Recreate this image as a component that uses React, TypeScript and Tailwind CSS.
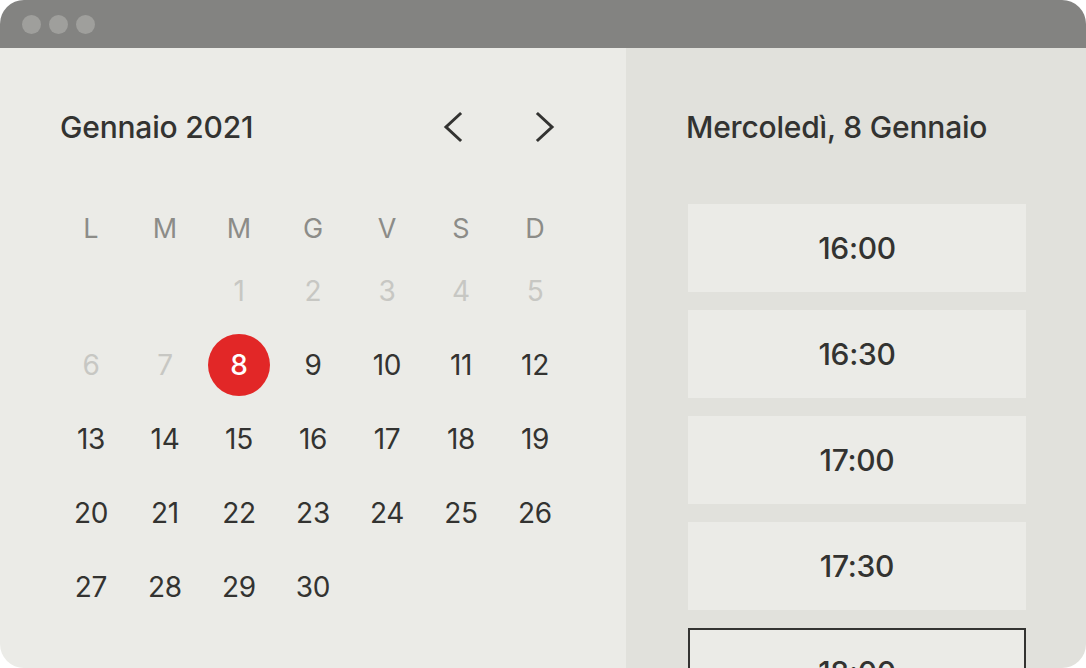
import { useState } from "react";

const weekdays = ["L", "M", "M", "G", "V", "S", "D"];

const cells: Array<{ day: number | null; muted?: boolean }> = [
  { day: null },
  { day: null },
  { day: 1, muted: true },
  { day: 2, muted: true },
  { day: 3, muted: true },
  { day: 4, muted: true },
  { day: 5, muted: true },
  { day: 6, muted: true },
  { day: 7, muted: true },
  ...Array.from({ length: 23 }, (_, i) => ({ day: i + 8 })),
];

const slots = ["16:00", "16:30", "17:00", "17:30", "18:00"];

function Chevron({ dir }: { dir: "left" | "right" }) {
  return (
    <svg width="20" height="32" viewBox="0 0 20 32" fill="none" stroke="#333331" strokeWidth="3" strokeLinecap="square">
      {dir === "left" ? <polyline points="17,3 3,16 17,29" /> : <polyline points="3,3 17,16 3,29" />}
    </svg>
  );
}

export default function App() {
  const [selected, setSelected] = useState(8);
  const [slot, setSlot] = useState("18:00");

  return (
    <div className="h-[668px] w-[1086px] bg-white font-['Inter',sans-serif] text-[#333331]">
      <div className="flex h-full w-full flex-col overflow-hidden rounded-[24px]">
        <div className="flex h-12 shrink-0 items-center gap-[8px] bg-[#838381] pl-[22px]">
          <span className="h-[19px] w-[19px] rounded-full bg-[#9f9f9c]" />
          <span className="h-[19px] w-[19px] rounded-full bg-[#9f9f9c]" />
          <span className="h-[19px] w-[19px] rounded-full bg-[#9f9f9c]" />
        </div>

        <div className="flex flex-1">
          <section className="w-[626px] bg-[#ebebe7] pt-[59px]">
            <div className="flex h-10 items-center pl-[60px] pr-[61px]">
              <h1 className="flex-1 text-[30px] font-medium tracking-[-0.2px]">Gennaio 2021</h1>
              <button className="flex h-10 w-10 items-center justify-center">
                <Chevron dir="left" />
              </button>
              <button className="ml-[52px] flex h-10 w-10 items-center justify-center">
                <Chevron dir="right" />
              </button>
            </div>

            <div className="mt-[53px] ml-[54px] grid w-[518px] grid-cols-7">
              {weekdays.map((w, i) => (
                <div key={i} className="flex h-[54px] items-center justify-center pt-[4px] text-[27px] text-[#8c8c88]">
                  {w}
                </div>
              ))}
              {cells.map((c, i) => (
                <div key={i} className="flex h-[74px] items-center justify-center">
                  {c.day !== null && (
                    <button
                      onClick={() => !c.muted && setSelected(c.day as number)}
                      className={
                        "flex h-[62px] w-[62px] items-center justify-center rounded-full text-[28px] tracking-[-0.3px] " +
                        (c.muted
                          ? "text-[#c7c7c3]"
                          : c.day === selected
                            ? "bg-[#e22727] font-medium text-white"
                            : "text-[#333331]")
                      }
                    >
                      {c.day}
                    </button>
                  )}
                </div>
              ))}
            </div>
          </section>

          <section className="flex-1 bg-[#e1e1dc] pt-[59px] pl-[62px] pr-[60px]">
            <h2 className="-ml-[2px] flex h-10 items-center text-[30px] font-medium tracking-[-0.2px]">Mercoledì, 8 Gennaio</h2>
            <div className="mt-[57px] flex flex-col gap-[18px]">
              {slots.map((s) => (
                <button
                  key={s}
                  onClick={() => setSlot(s)}
                  className={
                    "flex h-[88px] shrink-0 items-center justify-center bg-[#ebebe7] text-[30px] font-medium tracking-[-0.3px] " +
                    (slot === s ? "border-2 border-[#333331]" : "")
                  }
                >
                  {s}
                </button>
              ))}
            </div>
          </section>
        </div>
      </div>
    </div>
  );
}
